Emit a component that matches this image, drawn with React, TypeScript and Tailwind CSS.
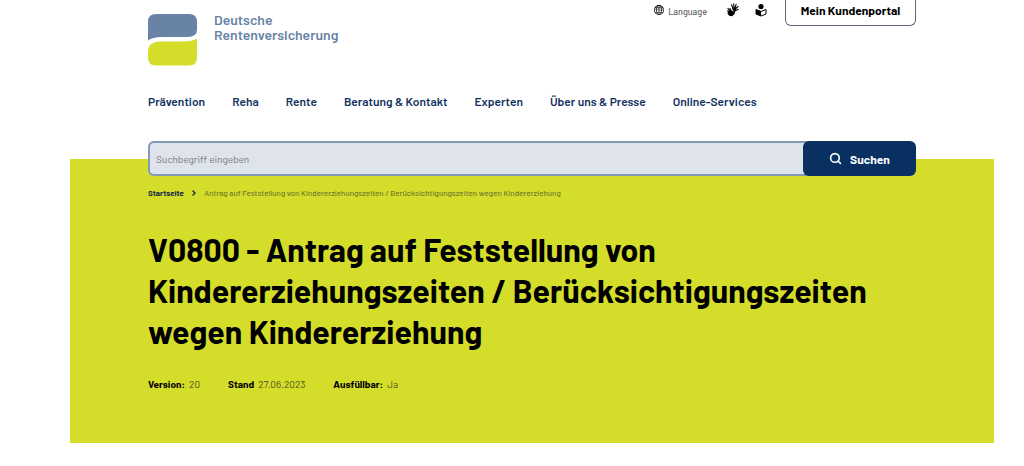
import { ChevronRight, Search } from "lucide-react";
import { BsGlobe } from "react-icons/bs";

const navItems = [
  "Prävention",
  "Reha",
  "Rente",
  "Beratung & Kontakt",
  "Experten",
  "Über uns & Presse",
  "Online-Services",
];

const details = [
  { label: "Version:", value: "20" },
  { label: "Stand", value: "27.06.2023" },
  { label: "Ausfüllbar:", value: "Ja" },
];

function Logo() {
  return (
    <a href="#" className="mt-3.5 flex items-start gap-4 text-[#6883a5]">
      <svg width="50" height="52" viewBox="0 0 50 52" aria-hidden="true">
        <path
          d="M8 0H41Q49 0 49 8V16Q49 23 39 23H14Q4 23 0 26.500V8Q0 0 8 0Z"
          fill="#6883a5"
        />
        <path
          d="M0 43.500V36Q1 28 11 27.500H35Q45 27.500 49 24.500V43.500Q49 51.500 41 51.500H8Q0 51.500 0 43.500Z"
          fill="#d4dd2a"
        />
      </svg>
      <span className="-mt-0.5 text-[14px] leading-[15px] font-semibold">
        Deutsche
        <br />
        Rentenversicherung
      </span>
    </a>
  );
}

function SigningHandsIcon() {
  return (
    <svg width="12" height="14" viewBox="0 0 12 14" aria-hidden="true">
      <g stroke="currentColor" strokeLinecap="round" fill="none">
        <path
          d="M6 5.500L4.500 1.800M7 5L6.700 .8M8 5L9.200 1.200M8.500 6L11 3.500M8.500 7.500L11.300 6.500"
          strokeWidth="1.100"
        />
        <path d="M3 8L1 5.500M4.500 9L3 5.500M2 9L.8 8" strokeWidth="1.200" />
      </g>
      <path d="M5.500 4.800L8.800 4.800L9.200 7.500L7.500 8.500L5.500 7Z" fill="currentColor" />
      <path
        d="M1 8L3.500 7L6 8.200L8.500 8L7.300 11.200L5 13.300L2.200 12.800L.5 10.500Z"
        fill="currentColor"
      />
    </svg>
  );
}

function EasyReadingIcon() {
  return (
    <svg width="12" height="14" viewBox="0 0 12 14" aria-hidden="true">
      <circle cx="6" cy="3.500" r="2.600" fill="currentColor" />
      <path
        d="M1 6.500L6 8.500L11 6.500V11L6 13L1 11Z"
        fill="white"
        stroke="currentColor"
        strokeLinejoin="round"
      />
      <path d="M1 6.500L6 8.500V13L1 11Z" fill="currentColor" />
    </svg>
  );
}

function Header() {
  return (
    <header className="px-[78px]">
      <div className="flex items-start justify-between">
        <Logo />
        <div className="flex items-start">
          <a
            href="#"
            className="mt-1 flex h-4 items-center gap-1 text-[9px] font-medium text-[#666]"
          >
            <BsGlobe size={10} className="mb-1 text-black" aria-hidden="true" />
            Language
          </a>
          <a href="#" aria-label="Gebärdensprache" className="mt-[3px] ml-5 text-black">
            <SigningHandsIcon />
          </a>
          <a href="#" aria-label="Leichte Sprache" className="mt-[3px] ml-4 text-black">
            <EasyReadingIcon />
          </a>
          <button
            type="button"
            className="ml-[18px] h-[26px] w-[131px] rounded-b-md border border-t-0 border-[#5f6878] bg-white pb-1.5 text-[12px] font-bold text-black"
          >
            Mein Kundenportal
          </button>
        </div>
      </div>
      <nav className="mt-[27px] flex gap-[27px] text-[12px] leading-4 font-semibold text-[#12335f]">
        {navItems.map((item) => (
          <a key={item} href="#" className="whitespace-nowrap">
            {item}
          </a>
        ))}
      </nav>
    </header>
  );
}

function SearchBar() {
  return (
    <form
      role="search"
      onSubmit={(event) => event.preventDefault()}
      className="-mt-[18px] flex h-[35px] rounded-md bg-[#dfe4ec]"
    >
      <input
        type="search"
        aria-label="Suchbegriff eingeben"
        placeholder="Suchbegriff eingeben"
        className="-mr-2 min-w-0 flex-1 rounded-l-md border-2 border-r-0 border-[#8398b5] bg-[#dfe4ec] px-1.5 pt-0.5 text-[10px] text-black outline-none placeholder:text-[#74777d]"
      />
      <button
        type="submit"
        className="relative flex w-[113px] items-center justify-center gap-2 rounded-md bg-[#083061] text-[12px] font-bold text-white"
      >
        <Search size={13} strokeWidth={3} aria-hidden="true" />
        Suchen
      </button>
    </form>
  );
}

export default function App() {
  return (
    <div className="bg-white pr-[30px] pb-6 pl-[70px] font-['Barlow','Roboto',sans-serif]">
      <Header />
      <main className="mt-[50px] flex flex-col bg-[#d4dd2a] px-[78px] pb-[51px]">
        <SearchBar />
        <nav
          aria-label="Brotkrumen"
          className="mt-[11px] flex items-center gap-1.5 text-[8px] leading-3 font-medium text-[#737b2a]"
        >
          <a href="#" className="font-bold text-[#12264a]">
            Startseite
          </a>
          <ChevronRight
            size={8}
            strokeWidth={4}
            className="text-[#12264a]"
            aria-hidden="true"
          />
          <span>
            Antrag auf Feststellung von Kindererziehungszeiten / Berücksichtigungszeiten
            wegen Kindererziehung
          </span>
        </nav>
        <h1 className="mt-[30px] text-[32px] leading-[41px] font-bold text-black">
          V0800 - Antrag auf Feststellung von Kindererziehungszeiten /
          Berücksichtigungszeiten wegen Kindererziehung
        </h1>
        <dl className="mt-6 flex gap-7 text-[10px] leading-4 text-[#4d521a]">
          {details.map(({ label, value }) => (
            <div key={label} className="flex gap-1">
              <dt className="font-bold text-black">{label}</dt>
              <dd>{value}</dd>
            </div>
          ))}
        </dl>
      </main>
    </div>
  );
}
